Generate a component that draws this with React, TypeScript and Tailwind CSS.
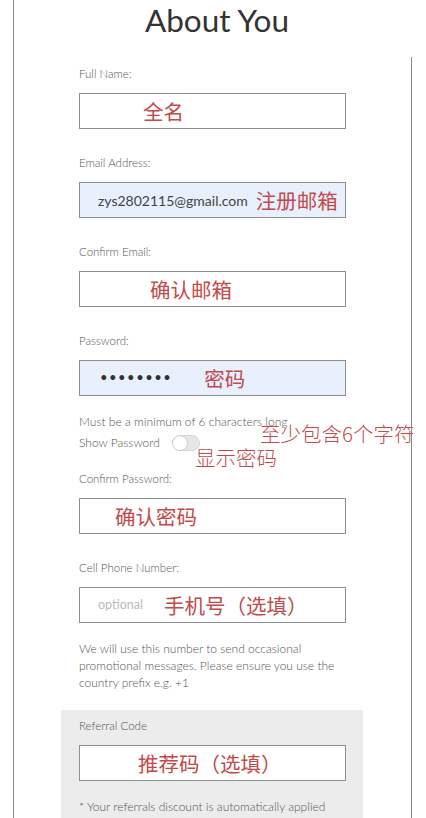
import React from "react";

const red = "text-[#c24a4a]";
const cjk = "font-['Noto_Sans_CJK_SC',sans-serif]";

function Label({ text }: { text: string }) {
  return <div className="h-[14px] text-[11.5px] leading-[14px] text-[#555] font-light">{text}</div>;
}

function Field({
  label,
  children,
  autofill,
  className = "mt-[27px]",
}: {
  label: string;
  children?: React.ReactNode;
  autofill?: boolean;
  className?: string;
}) {
  return (
    <div className={className}>
      <Label text={label} />
      <div
        className={`mt-[12px] flex h-[36px] w-[267px] items-center border border-[#8f8f8f] ${
          autofill ? "bg-[#e8f0fe]" : "bg-white"
        }`}
      >
        {children}
      </div>
    </div>
  );
}

function Note({ text, className = "" }: { text: string; className?: string }) {
  return <span className={`${red} ${cjk} text-[20.5px] leading-[24px] whitespace-nowrap ${className}`}>{text}</span>;
}

export default function App() {
  return (
    <div className="h-[818px] w-[426px] overflow-hidden bg-white font-['Lato',sans-serif]">
      <div className="ml-[13px] flex h-full flex-col border-l border-[#8a8a8a]">
        <div className="h-[57px] w-[406px] shrink-0">
          <h1 className="text-center text-[31.5px] leading-[40px] text-[#333]">About You</h1>
        </div>

        <div className="w-[398px] flex-1 border-r border-[#8a8a8a] pl-[47px] pt-[10px]">
          <div className="pl-[18px]">
            <Field label="Full Name:" className="">
              <Note text="全名" className="ml-[63px]" />
            </Field>

            <Field label="Email Address:" autofill>
              <span className="ml-[18px] text-[14px] text-[#444]">zys2802115@gmail.com</span>
              <Note text="注册邮箱" className="ml-[8px]" />
            </Field>

            <Field label="Confirm Email:">
              <Note text="确认邮箱" className="ml-[70px]" />
            </Field>

            <Field label="Password:" autofill>
              <span className="ml-[20px] text-[13px] tracking-[1.5px] text-[#333]">••••••••</span>
              <Note text="密码" className="ml-[32px]" />
            </Field>

            <div className="relative mt-[18px] text-[12px] font-light text-[#555]">
              <div className="leading-[16px]">Must be a minimum of 6 characters long</div>
              <div className="mt-[5px] flex h-[16px] items-center">
                <span>Show Password</span>
                <div className="ml-[12px] flex h-[16px] w-[28px] items-center rounded-full border border-[#d6d6d6] bg-[#e6e6e6]">
                  <div className="h-[16px] w-[16px] -ml-px rounded-full border border-[#cfcfcf] bg-white" />
                </div>
              </div>
              <Note text="至少包含6个字符" className="absolute left-[181px] top-[7px]" />
              <Note text="显示密码" className="absolute left-[116px] top-[31px]" />
            </div>

            <Field label="Confirm Password:" className="mt-[21px]">
              <Note text="确认密码" className="ml-[35px]" />
            </Field>

            <Field label="Cell Phone Number:">
              <span className="ml-[18px] text-[12.5px] text-[#bbb]">optional</span>
              <Note text="手机号（选填）" className="ml-[21px]" />
            </Field>

            <p className="mt-[17px] w-[270px] text-[12px] font-light leading-[17px] text-[#555]">
              We will use this number to send occasional promotional messages. Please ensure you use the country
              prefix e.g. +1
            </p>
          </div>

          <div className="mt-[19px] h-[200px] w-[302px] bg-[#ececec] pl-[18px] pt-[9px]">
            <Field label="Referral Code" className="">
              <Note text="推荐码（选填）" className="ml-[58px]" />
            </Field>
            <p className="mt-[17px] text-[12px] font-light leading-[17px] text-[#555]">
              * Your referrals discount is automatically applied
            </p>
          </div>
        </div>
      </div>
    </div>
  );
}
